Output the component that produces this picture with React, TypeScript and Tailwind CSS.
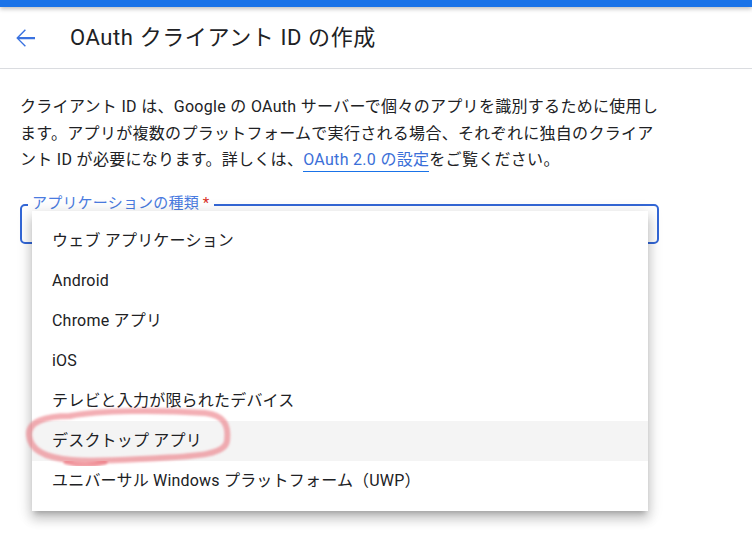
import React from 'react';

const items = [
    'ウェブ アプリケーション',
    'Android',
    'Chrome アプリ',
    'iOS',
    'テレビと入力が限られたデバイス',
    'デスクトップ アプリ',
    'ユニバーサル Windows プラットフォーム（UWP）',
];

const font = "font-['Roboto','Noto_Sans_CJK_JP',sans-serif]";

const App = () => {
    return (
        <div className={`relative h-[553px] w-[752px] overflow-hidden bg-white text-[#202124] ${font}`}>
            {/* top bar */}
            <div className="h-[7px] bg-[#1a73e8] shadow-[0_2px_4px_rgba(0,0,0,0.25)]" />

            {/* header */}
            <div className="flex h-[62px] items-center border-b border-[#dadce0]">
                <div className="flex w-[70px] items-center pl-[10px]">
                    <svg width="30" height="30" viewBox="0 0 24 24">
                        <path d="M20 11.1H7.4l5.3-5.3L11.9 5 5 12l6.9 7 0.8-0.8-5.3-5.3H20z" fill="#3a72e0" />
                    </svg>
                </div>
                <h1 className="text-[22px] font-normal tracking-[0.6px]">OAuth クライアント ID の作成</h1>
            </div>

            {/* body */}
            <div className="px-5 pt-[25px]">
                <p className="text-[16px] leading-[26.5px] tracking-[0.3px] whitespace-nowrap">
                    クライアント ID は、Google の OAuth サーバーで個々のアプリを識別するために使用し
                    <br />
                    ます。アプリが複数のプラットフォームで実行される場合、それぞれに独自のクライア
                    <br />
                    ント ID が必要になります。詳しくは、
                    <span className="border-b border-[#1a73e8] pb-[2px] text-[#3b6fd8]">OAuth 2.0 の設定</span>
                    をご覧ください。
                </p>

                {/* select field */}
                <div className="relative mt-[30px] h-[40px] w-[639px] rounded-[5px] border-2 border-[#3367d6]">
                    <span className="absolute -top-[12px] left-[6px] bg-white px-[4px] text-[15px] leading-[18px] tracking-[0.2px] text-[#4a7be0]">
                        アプリケーションの種類 <span className="text-[#d93025]">*</span>
                    </span>

                    <div className="absolute top-[5px] left-[10px] z-10 w-[616px] bg-white py-[10px] shadow-[0_5px_5px_-3px_rgba(0,0,0,0.2),0_8px_10px_1px_rgba(0,0,0,0.14),0_3px_14px_2px_rgba(0,0,0,0.12)]">
                        {items.map((label, i) => (
                            <div
                                key={label}
                                className={`flex h-[40px] items-center px-5 text-[16px] tracking-[0.2px] ${i === 5 ? 'bg-[#f4f4f4]' : ''}`}
                            >
                                {label}
                            </div>
                        ))}
                    </div>
                </div>
            </div>

            {/* hand-drawn red loop */}
            <svg className="pointer-events-none absolute top-0 left-0 z-20" width="752" height="553">
                <defs>
                    <filter id="soft">
                        <feGaussianBlur stdDeviation="1.3" />
                    </filter>
                </defs>
                <path
                    d="M70 416 C100 410 160 410 205 413 C224 415 229 425 227 441 C225 454 200 456 160 458 C120 460 95 462 72 460 C45 458 30 450 29 435 C28 422 45 416 70 416"
                    fill="none"
                    stroke="rgba(235,120,130,0.6)"
                    strokeWidth="6"
                    strokeLinecap="round"
                    filter="url(#soft)"
                />
                <path
                    d="M66 462 C78 466 92 466 105 462"
                    fill="none"
                    stroke="rgba(235,110,120,0.65)"
                    strokeWidth="5"
                    strokeLinecap="round"
                    filter="url(#soft)"
                />
            </svg>
        </div>
    );
};

export default App;
